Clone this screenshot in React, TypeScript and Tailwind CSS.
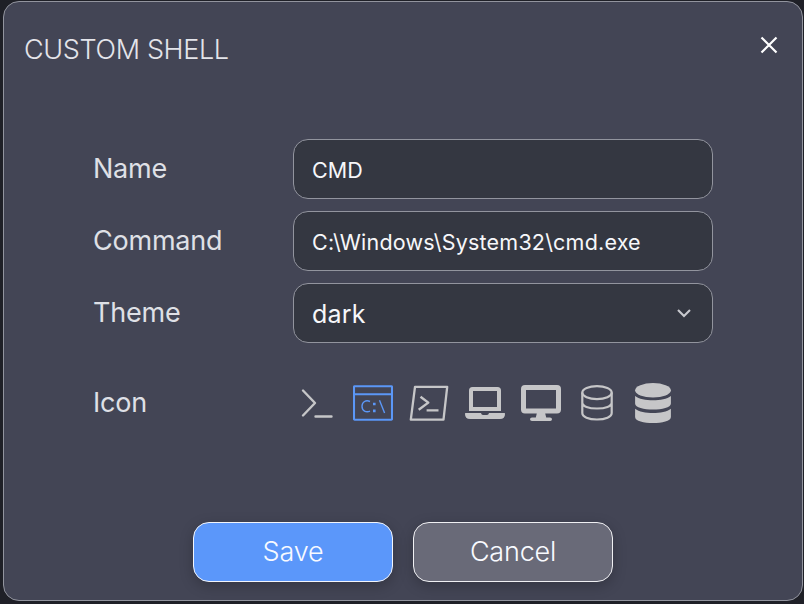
import type { ReactNode } from "react";

function Row({ label, children }: { label: string; children: ReactNode }) {
  return (
    <div className="flex h-[60px] items-center">
      <div className="w-[200px] shrink-0 text-[27px] font-[380] leading-8 tracking-[-0.22px] text-[#dfe0e6]">{label}</div>
      {children}
    </div>
  );
}

const field =
  "flex h-[60px] w-[420px] items-center rounded-[15px] border border-[#92949e] bg-[#343741] pl-[18px] pr-[18px] pt-[3px] text-[#f7f7fa]";

function Icons() {
  const c = "block size-10";
  return (
    <div className="ml-1 flex gap-4 text-[#c6c6c8]">
      <svg className={c} viewBox="0 0 40 40" fill="none" stroke="currentColor" strokeWidth="2.4" strokeLinecap="round" strokeLinejoin="round">
        <path d="M6 7.5 18 20 6 32.5M18.5 33.5H34.5" />
      </svg>
      <svg className={`${c} text-[#5b97f7]`} viewBox="0 0 40 40" fill="none" stroke="currentColor" strokeWidth="2.1">
        <rect x="1" y="3.3" width="38" height="33.4" rx="0.6" />
        <path d="M1 11.2H39" />
        <path d="M17 18.500C13 16.700 9 18.700 9 23.300S13 29.800 17 28.200M26.500 17.300 31.600 30" strokeWidth="1.4" />
        <path d="M20 19.700h2.600v2.600h-2.600zM20 26.600h2.600v2.600h-2.600z" fill="currentColor" stroke="none" />
      </svg>
      <svg className={c} viewBox="0 0 40 40" fill="none" stroke="currentColor" strokeWidth="2.3" strokeLinejoin="round">
        <path d="M6 3.8H38.2L34.5 36.7H1.8Z" />
        <path d="M11.5 13.7 19.3 19.6 9.7 26.7M17.6 27.4H29.5" strokeWidth="2.4" />
      </svg>
      <svg className={c} viewBox="0 0 40 40" fill="currentColor">
        <path fillRule="evenodd" d="M7.5 4h25Q36 4 36 7.5V28H4V7.5Q4 4 7.5 4ZM8 8v16h24V8Z" />
        <path d="M.6 30H16q.4 2 2 2h4q1.600 0 2-2H39.400q.6 0 .6.6V31q0 5-5 5H5q-5 0-5-5v-.4q0-.6.6-.6Z" />
      </svg>
      <svg className={c} viewBox="0 0 40 40" fill="currentColor">
        <path fillRule="evenodd" d="M4 2h32q4 0 4 4v20.500q0 4-4 4H24.200l1 4H29q2 0 2 1.800T29 38H11q-2 0-2-1.700t2-1.800h3.800l1-4H4q-4 0-4-4V6q0-4 4-4Zm1 5v18.500h30V7Z" />
      </svg>
      <svg className={c} viewBox="0 0 40 40" fill="none" stroke="currentColor" strokeWidth="2.2">
        <ellipse cx="20" cy="9.600" rx="14.700" ry="6.500" />
        <path d="M5.300 9.600V30C5.300 33.800 11.500 36.500 20 36.500S34.700 33.800 34.700 30V9.600M5.300 19.500C5.300 23.300 11.500 25.500 20 25.500S34.700 23.300 34.700 19.500" />
      </svg>
      <svg className={c} viewBox="0 0 40 40" fill="currentColor">
        <ellipse cx="20" cy="7.300" rx="17.900" ry="7.300" />
        <path d="M2.100 13C9.500 18.800 30.500 18.800 37.900 13V20.500C37.900 28.500 2.100 28.500 2.100 20.500Z" />
        <path d="M2.100 25.700C9.500 31.500 30.500 31.500 37.900 25.700V34C37.900 42 2.100 42 2.100 34Z" />
      </svg>
    </div>
  );
}

export default function App() {
  return (
    <div className="h-[604px] w-[804px] overflow-hidden bg-[#1f2027] pl-[3px] pt-px font-['Inter',sans-serif]">
      <div className="flex h-[600px] w-[800px] flex-col rounded-[16px] border border-[#92949e] bg-[#434555]">
        <header className="flex h-[137px] items-start justify-between pl-5 pr-[24px] pt-[32px]">
          <h1 className="text-[27px] font-[360] leading-8 tracking-[-0.35px] text-[#e3e4ea]">CUSTOM SHELL</h1>
          <button aria-label="Close" className="mt-[2px]">
            <svg className="block size-[18px]" viewBox="0 0 18 18" fill="none" stroke="#fff" strokeWidth="2.200">
              <path d="M1.500 1.500 16.500 16.500M16.500 1.500 1.500 16.500" />
            </svg>
          </button>
        </header>
        <main className="flex flex-col gap-3 pl-[89px]">
          <Row label="Name">
            <div className={`${field} text-[21.5px] tracking-[0.1px]`}>CMD</div>
          </Row>
          <Row label="Command">
            <div className={`${field} text-[21.5px] tracking-[0.2px]`}>C:\Windows\System32\cmd.exe</div>
          </Row>
          <Row label="Theme">
            <div className={`${field} justify-between text-[25px] tracking-[0.2px]`}>
              dark
              <svg className="mb-0.5 mr-[3px] block h-2.5 w-3.5" viewBox="0 0 14 10" fill="none" stroke="#c8c9ce" strokeWidth="2.100">
                <path d="M1 1 7 7 13 1" />
              </svg>
            </div>
          </Row>
          <div className="mt-[18px]">
            <Row label="Icon">
              <Icons />
            </Row>
          </div>
        </main>
        <footer className="mt-[89px] flex gap-5 pl-[189px] text-[27px] font-[360] tracking-[-0.2px] text-[#f8faff]">
          <button className="h-[60px] w-[200px] rounded-[16px] border border-[#f2f5fb] bg-[#5b97fa] shadow-[0_4px_14px_rgba(0,0,0,0.22)]">Save</button>
          <button className="h-[60px] w-[200px] rounded-[16px] border border-[#f0f0f3] bg-[#696a78] shadow-[0_4px_14px_rgba(0,0,0,0.22)]">Cancel</button>
        </footer>
      </div>
    </div>
  );
}
